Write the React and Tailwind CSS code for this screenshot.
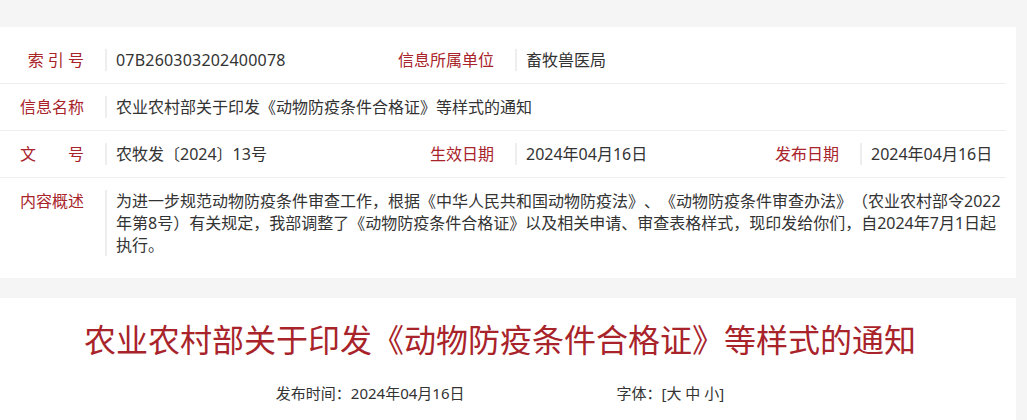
import React from "react";

const FONT = { fontFamily: '"Noto Sans", "Noto Sans CJK SC", sans-serif' };

function Label({ children, className = "" }) {
  return (
    <div className={`text-right pr-[21px] text-[16px] leading-[22px] text-[#a8232a] whitespace-pre ${className}`}>
      {children}
    </div>
  );
}

function Value({ children, className = "" }) {
  return (
    <div className={`border-l-2 border-[#eeeeee] pl-[9px] text-[16px] leading-[22px] text-[#333333] [text-spacing-trim:space-all] ${className}`}>
      {children}
    </div>
  );
}

export default function App() {
  return (
    <div className="min-h-[420px] w-full bg-[#f5f5f5]" style={FONT}>
      <div className="h-[27px]" />
      <div className="w-[1016px] bg-white pt-[10px] pb-[10px]">
        <div className="w-[1006px]">
          <div className="grid grid-cols-[105px_290px_120px_225px_120px_146px] items-start border-b border-[#eeeeee] py-[12px]">
            <Label>{"索 引 号"}</Label>
            <Value className="tracking-[0.2px]">07B260303202400078</Value>
            <Label>信息所属单位</Label>
            <Value className="col-span-3">畜牧兽医局</Value>
          </div>
          <div className="grid grid-cols-[105px_290px_120px_225px_120px_146px] items-start border-b border-[#eeeeee] py-[12px]">
            <Label>信息名称</Label>
            <Value className="col-span-5">农业农村部关于印发《动物防疫条件合格证》等样式的通知</Value>
          </div>
          <div className="grid grid-cols-[105px_290px_120px_225px_120px_146px] items-start border-b border-[#eeeeee] py-[12px]">
            <Label>{"文　　号"}</Label>
            <Value>农牧发〔2024〕13号</Value>
            <Label>生效日期</Label>
            <Value>2024年04月16日</Value>
            <Label>发布日期</Label>
            <Value>2024年04月16日</Value>
          </div>
          <div className="grid grid-cols-[105px_290px_120px_225px_120px_146px] items-start pt-[12px] pb-[12px]">
            <Label>内容概述</Label>
            <Value className="col-span-5 pr-[4px]">
              为进一步规范动物防疫条件审查工作，根据《中华人民共和国动物防疫法》、《动物防疫条件审查办法》（农业农村部令2022年第8号）有关规定，我部调整了《动物防疫条件合格证》以及相关申请、审查表格样式，现印发给你们，自2024年7月1日起执行。
            </Value>
          </div>
        </div>
      </div>
      <div className="h-[20px]" />
      <div className="w-[1016px] bg-white pt-[18px] pr-[16px] h-[122px]">
        <h1 className="text-center text-[32px] leading-[48px] text-[#a8232a] font-normal">
          农业农村部关于印发《动物防疫条件合格证》等样式的通知
        </h1>
        <div className="mt-[19px] flex justify-center gap-[152px] text-[15px] leading-[20px] text-[#333333] [text-spacing-trim:space-all]">
          <span>发布时间：2024年04月16日</span>
          <span>字体：[大 中 小]</span>
        </div>
      </div>
    </div>
  );
}
